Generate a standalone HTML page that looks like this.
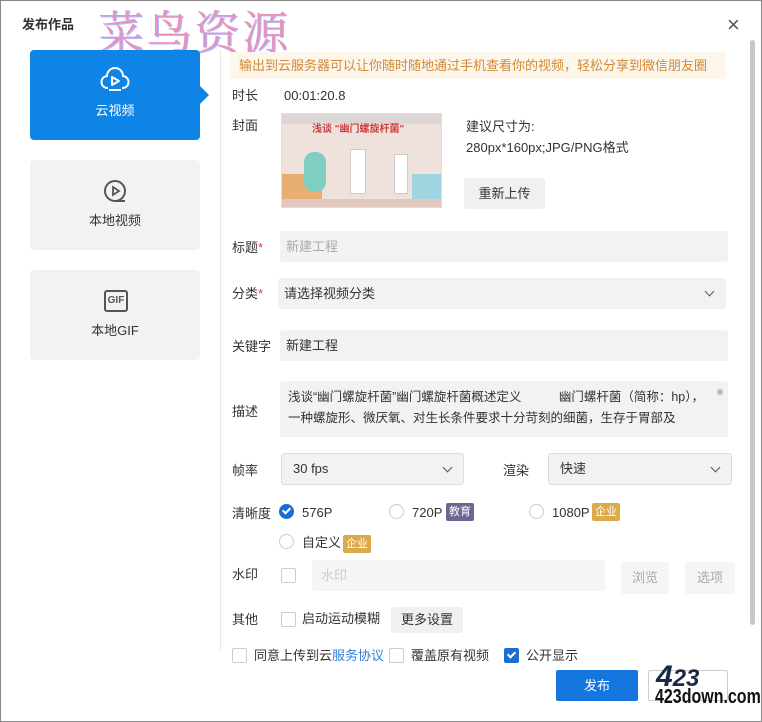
<!DOCTYPE html>
<html><head><meta charset="utf-8"><style>
*{margin:0;padding:0;box-sizing:border-box}
body{width:762px;height:722px;background:#fff;font-family:"Liberation Sans","Noto Sans CJK SC",sans-serif;font-size:13px;line-height:15px;color:#333;position:relative;overflow:hidden}
.a{position:absolute}
.lbl{position:absolute;left:232px;font-size:13px;color:#333}
.inp{position:absolute;background:#f2f2f2;border-radius:3px}
.side{position:absolute;left:30px;width:170px;height:90px;border-radius:4px;background:#f2f2f2;text-align:center;font-size:13px;color:#333}
.cb{position:absolute;width:15px;height:15px;border:1px solid #ccc;border-radius:2px;background:#fff}
.rd{position:absolute;width:15px;height:15px;border:1px solid #ccc;border-radius:50%;background:#fff}
.tag{position:absolute;color:#fff;font-size:11px;padding:0 3px;height:18px;line-height:18px;border-radius:2px}
.btn{position:absolute;background:#f0f0f0;border-radius:3px;text-align:center;font-size:13px}
.chev{position:absolute;width:7px;height:7px;border-right:1.5px solid #555;border-bottom:1.5px solid #555;transform:rotate(45deg)}
</style></head><body>
<div class="a" style="left:0;top:0;width:762px;height:722px;border:1px solid #888"></div>
<div class="a" style="left:22px;top:17px;font-size:13px;font-weight:bold">发布作品</div>
<div class="a" style="left:98px;top:2px;font-family:'Noto Serif CJK SC',serif;font-size:46px;color:#e47fb4;letter-spacing:2px;text-shadow:1px 1px 0 #9ab0ff;opacity:.85;line-height:56px">菜鸟资源</div>
<div class="a" style="left:727px;top:14px;font-size:22px;color:#555;line-height:22px">×</div>

<div class="side" style="top:50px;background:#0e84e6;color:#fff">
<svg class="a" style="left:70px;top:16px" width="30" height="28" viewBox="0 0 30 28"><path d="M8 22a6 6 0 0 1-1-12 8 8 0 0 1 16 0 6 6 0 0 1-1 12" fill="none" stroke="#fff" stroke-width="2"/><path d="M12 11v8l7-4z" fill="none" stroke="#fff" stroke-width="2" stroke-linejoin="round"/><path d="M9 24h12" stroke="#fff" stroke-width="2"/></svg>
<div class="a" style="left:0;width:170px;top:53px">云视频</div></div>
<div class="a" style="left:200px;top:86px;width:0;height:0;border-top:9px solid transparent;border-bottom:9px solid transparent;border-left:9px solid #0e84e6"></div>
<div class="side" style="top:160px">
<svg class="a" style="left:72px;top:18px" width="26" height="26" viewBox="0 0 26 26"><circle cx="13" cy="13" r="10" fill="none" stroke="#555" stroke-width="2"/><path d="M11 9v8l6-4z" fill="none" stroke="#555" stroke-width="1.8"/><path d="M13 23h10" stroke="#555" stroke-width="2"/></svg>
<div class="a" style="left:0;width:170px;top:53px">本地视频</div></div>
<div class="side" style="top:270px">
<div class="a" style="left:74px;top:20px;width:24px;height:22px;border:2px solid #555;border-radius:3px;font-size:10px;font-weight:bold;line-height:18px;color:#555">GIF</div>
<div class="a" style="left:0;width:170px;top:53px">本地GIF</div></div>

<div class="a" style="left:220px;top:50px;width:1px;height:600px;background:#e8e8e8"></div>
<div class="a" style="left:750px;top:40px;width:5px;height:585px;background:#c8c8c8;border-radius:3px"></div>

<div class="a" style="left:230px;top:52px;width:496px;height:27px;background:#fdf6ea;color:#d08a3a;font-size:13px;line-height:27px;padding-left:9px">输出到云服务器可以让你随时随地通过手机查看你的视频，轻松分享到微信朋友圈</div>
<div class="lbl" style="top:88px">时长</div><div class="a" style="left:284px;top:88px">00:01:20.8</div>
<div class="lbl" style="top:118px">封面</div>
<div class="a" style="left:281px;top:113px;width:161px;height:95px;background:#efe2dc;border:1px solid #ddd;overflow:hidden">
<div class="a" style="left:0;top:0;width:161px;height:10px;background:#dcd7d4"></div>
<div class="a" style="left:30px;top:8px;color:#c84040;font-size:10px;font-weight:bold">浅谈 "幽门螺旋杆菌"</div>
<div class="a" style="left:0;top:60px;width:40px;height:25px;background:#e8b070"></div>
<div class="a" style="left:22px;top:38px;width:22px;height:40px;background:#7ecfc0;border-radius:10px"></div>
<div class="a" style="left:68px;top:35px;width:16px;height:45px;background:#fff;border:1px solid #ccc"></div>
<div class="a" style="left:112px;top:40px;width:14px;height:40px;background:#fff;border:1px solid #ccc"></div>
<div class="a" style="left:130px;top:60px;width:30px;height:25px;background:#9fd5e0"></div>
<div class="a" style="left:0;top:85px;width:161px;height:10px;background:#e0c8c0"></div></div>
<div class="a" style="left:466px;top:119px">建议尺寸为:</div>
<div class="a" style="left:466px;top:140px">280px*160px;JPG/PNG格式</div>
<div class="btn" style="left:464px;top:178px;width:81px;height:31px;line-height:31px">重新上传</div>

<div class="lbl" style="top:240px">标题<span style="color:#e33">*</span></div>
<div class="inp" style="left:280px;top:231px;width:448px;height:31px;color:#aaa;line-height:31px;padding-left:6px">新建工程</div>
<div class="lbl" style="top:286px">分类<span style="color:#e33">*</span></div>
<div class="inp" style="left:278px;top:278px;width:448px;height:31px;line-height:31px;padding-left:6px">请选择视频分类</div>
<div class="chev" style="left:706px;top:288px"></div>
<div class="lbl" style="top:339px">关键字</div>
<div class="inp" style="left:280px;top:330px;width:448px;height:31px;line-height:31px;padding-left:6px">新建工程</div>
<div class="lbl" style="top:404px">描述</div>
<div class="inp" style="left:280px;top:381px;width:448px;height:56px;padding:6px 20px 0 8px;line-height:21px;font-size:12.5px">浅谈“幽门螺旋杆菌”幽门螺旋杆菌概述定义　　　幽门螺杆菌（简称：hp），一种螺旋形、微厌氧、对生长条件要求十分苛刻的细菌，生存于胃部及</div>
<div class="a" style="left:717px;top:389px;width:6px;height:6px;border-radius:50%;background:#bbb"></div>

<div class="lbl" style="top:463px">帧率</div>
<div class="inp" style="left:281px;top:453px;width:183px;height:32px;border:1px solid #ddd;line-height:30px;padding-left:11px">30 fps</div>
<div class="chev" style="left:444px;top:464px"></div>
<div class="a" style="left:503px;top:463px">渲染</div>
<div class="inp" style="left:548px;top:453px;width:184px;height:32px;border:1px solid #ddd;line-height:30px;padding-left:11px">快速</div>
<div class="chev" style="left:712px;top:464px"></div>

<div class="lbl" style="top:506px">清晰度</div>
<div class="a" style="left:279px;top:504px;width:15px;height:15px;border-radius:50%;background:#1b6ed1"></div>
<div class="a" style="left:284px;top:506px;width:5px;height:8px;border-right:2px solid #fff;border-bottom:2px solid #fff;transform:rotate(45deg)"></div>
<div class="a" style="left:302px;top:505px">576P</div>
<div class="rd" style="left:389px;top:504px"></div><div class="a" style="left:412px;top:505px">720P</div>
<div class="tag" style="left:446px;top:503px;background:#6e6590">教育</div>
<div class="rd" style="left:529px;top:504px"></div><div class="a" style="left:552px;top:505px">1080P</div>
<div class="tag" style="left:592px;top:503px;background:#dda94a">企业</div>
<div class="rd" style="left:279px;top:534px"></div><div class="a" style="left:302px;top:535px">自定义</div>
<div class="tag" style="left:343px;top:535px;background:#dda94a">企业</div>

<div class="lbl" style="top:567px">水印</div>
<div class="cb" style="left:281px;top:568px"></div>
<div class="inp" style="left:312px;top:560px;width:293px;height:31px;background:#f5f5f5;color:#ccc;line-height:31px;padding-left:9px">水印</div>
<div class="btn" style="left:621px;top:562px;width:48px;height:32px;line-height:32px;color:#aaa;background:#f5f5f5">浏览</div>
<div class="btn" style="left:685px;top:562px;width:50px;height:32px;line-height:32px;color:#aaa;background:#f5f5f5">选项</div>

<div class="lbl" style="top:612px">其他</div>
<div class="cb" style="left:281px;top:612px"></div>
<div class="a" style="left:302px;top:611px">启动运动模糊</div>
<div class="btn" style="left:391px;top:607px;width:72px;height:26px;line-height:26px">更多设置</div>

<div class="cb" style="left:232px;top:648px"></div>
<div class="a" style="left:254px;top:648px">同意上传到云<span style="color:#2f7fd8">服务协议</span></div>
<div class="cb" style="left:389px;top:648px"></div>
<div class="a" style="left:411px;top:648px">覆盖原有视频</div>
<div class="a" style="left:504px;top:648px;width:15px;height:15px;border-radius:2px;background:#1b6ed1"></div>
<div class="a" style="left:509px;top:650px;width:5px;height:8px;border-right:2px solid #fff;border-bottom:2px solid #fff;transform:rotate(45deg)"></div>
<div class="a" style="left:526px;top:648px">公开显示</div>

<div class="a" style="left:556px;top:670px;width:82px;height:31px;background:#1676e0;color:#fff;border-radius:2px;text-align:center;line-height:31px">发布</div>
<div class="a" style="left:648px;top:670px;width:80px;height:31px;border:1px solid #ccc;border-radius:2px"></div>
<div class="a" style="left:656px;top:664px;font-size:30px;font-weight:900;color:#1a2a44;line-height:26px;font-style:italic">4<span style="font-size:24px">23</span></div>
<div class="a" style="left:655px;top:686px;font-size:20px;font-weight:bold;color:#111;line-height:22px;transform:scaleX(.8);transform-origin:left">423down.com</div>
</body></html>
